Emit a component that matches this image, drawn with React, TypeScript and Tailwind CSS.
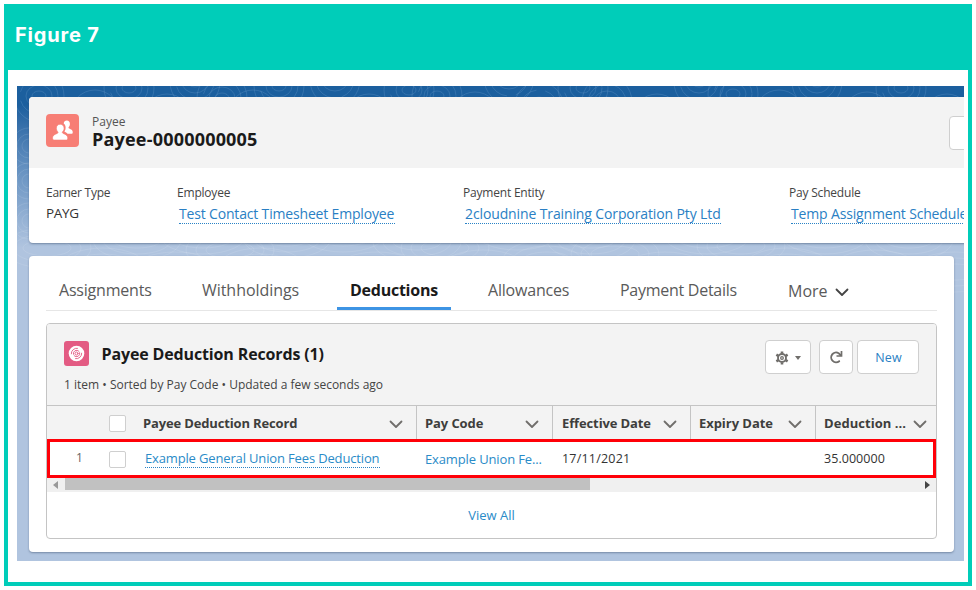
import React from "react";

const ripples = [
  [22, 10], [78, 30], [112, 2], [150, 34], [178, -4], [205, 12], [236, 30], [262, 0], [318, -6], [352, 34],
  [392, 4], [420, 10], [458, 32], [492, -8], [522, 22], [566, 2], [590, 16], [640, 34], [682, -4], [716, 8],
  [762, 30], [800, -4], [850, 32], [884, 2], [930, 34],
];

function Contours() {
  return (
    <svg className="absolute inset-0" width="947" height="475" fill="none">
      <g stroke="#8fb8e0" strokeOpacity="0.2" strokeWidth="1">
        {ripples.map(([x, y]) => (
          <g key={x}>
            <ellipse cx={x} cy={y} rx="7" ry="5" />
            <ellipse cx={x} cy={y} rx="13" ry="11" />
            <ellipse cx={x} cy={y} rx="19" ry="18" strokeDasharray="22 9" />
            <ellipse cx={x} cy={y} rx="25" ry="26" />
          </g>
        ))}
      </g>
      <g stroke="#ffffff" strokeOpacity="0.1">
        {ripples.map(([x, y]) => (
          <g key={x}>
            <ellipse cx={x + 8} cy={y + 152} rx="24" ry="8" />
            <ellipse cx={x + 8} cy={y + 152} rx="34" ry="14" />
            <ellipse cx={x + 8} cy={y + 152} rx="44" ry="20" />
          </g>
        ))}
        {[60, 95, 135].map((y) => (
          <g key={y}>
            <circle cx="12" cy={y} r="7" />
            <circle cx="12" cy={y} r="12" />
            <circle cx="12" cy={y} r="18" />
          </g>
        ))}
      </g>
    </svg>
  );
}

function Chevron({ className = "" }: { className?: string }) {
  return (
    <svg className={"shrink-0 " + className} width="14" height="9" viewBox="0 0 14 9" fill="none" stroke="currentColor" strokeWidth="1.8" strokeLinecap="round" strokeLinejoin="round">
      <path d="M1.5 1.5 7 7l5.5-5.5" />
    </svg>
  );
}

function PeopleIcon() {
  return (
    <svg className="block h-[33px] w-[33px]" viewBox="0 0 33 33">
      <g fill="#fff">
        <path d="M20.800 6.600c2 0 3.100 1.400 3.100 3.300 0 1.300-.5 2.300-1.200 3-.4.500-.2 1.100.5 1.500 1.900.9 3.500 1.600 3.500 3.300v1c0 .7-.5 1.100-1.200 1.100h-4c-.8-1.200-2-1.800-3.100-2.300.9-1.100 1.200-2.500 1.200-4 0-1.600-.6-3.100-1.900-4 .2-1.700 1.300-2.900 3.100-2.900z" />
        <path stroke="#f77e75" strokeWidth="0.700" d="M14.200 10.200c2.400 0 3.900 1.700 3.900 4 0 1.500-.6 2.700-1.500 3.500-.5.600-.3 1.300.5 1.700 2.500 1 4.600 2 4.600 4v1.200c0 .9-.6 1.500-1.500 1.500H8.200c-.9 0-1.600-.6-1.600-1.500v-1.200c0-2 2.100-3 4.600-4 .9-.4 1-1.100.5-1.700-.8-.8-1.400-2-1.400-3.500 0-2.300 1.500-4 3.900-4z" />
      </g>
    </svg>
  );
}

function DiscIcon() {
  return (
    <svg className="block" width="25" height="25" viewBox="0 0 25 25" fill="none">
      <circle cx="12.500" cy="12.500" r="7.800" fill="#fff" />
      <g stroke="#e35b83" strokeWidth="0.900" strokeLinecap="round">
        <circle cx="12.500" cy="12.500" r="1.500" />
        <path d="M9.400 13.300a3.300 3.300 0 0 1 5.500-3.100M15.700 11.700a3.300 3.300 0 0 1-5.500 3.100" />
        <path d="M7.300 12.800a5.200 5.200 0 0 1 6.200-5.500M17.700 12.200a5.200 5.200 0 0 1-6.200 5.500" />
      </g>
    </svg>
  );
}

function GearIcon() {
  return (
    <svg width="14" height="14" viewBox="0 0 14 14" fill="none" stroke="#706e6b">
      <circle cx="7" cy="7" r="4" strokeWidth="1.900" />
      <circle cx="7" cy="7" r="1.300" strokeWidth="1.300" />
      <path strokeWidth="2.600" d="M7 .4v2.200M7 11.400v2.200M1.360 3.740l1.900 1.100M10.740 9.160l1.900 1.100M12.640 3.740l-1.900 1.100M3.260 9.160l-1.900 1.100" />
    </svg>
  );
}

function RefreshIcon() {
  return (
    <svg width="14" height="14" viewBox="0 0 14 14" fill="none">
      <path d="M10.200 11.200A4.900 4.900 0 1 1 9.600 3.200L11.400 5" stroke="#706e6b" strokeWidth="1.900" strokeLinecap="round" />
      <path d="M12.500 1v5H7.500" stroke="#706e6b" strokeWidth="1.700" />
    </svg>
  );
}

function Detail({ label, width, tracking, children }: { label: string; width: string; tracking: string; children: React.ReactNode }) {
  return (
    <div className={"shrink-0 " + width}>
      <div className={"h-[14px] text-[12px] leading-[16px] text-[#444] " + tracking}>{label}</div>
      {children}
    </div>
  );
}

function DetailLink({ text, width, tracking }: { text: string; width: string; tracking: string }) {
  return (
    <div className={"mt-[6px] ml-[2px] h-[19px] border-b border-dotted border-[#2a83c6] text-[14px] leading-[18px] text-[#2a7fc4] " + width + " " + tracking}>
      {text}
    </div>
  );
}

function HeadCell({ text, width, tracking }: { text: string; width: string; tracking: string }) {
  return (
    <div className={"flex shrink-0 items-center justify-between border-r border-[#c4c4c4] pt-[2px] text-[13px] font-bold text-[#3e3e3c] " + width}>
      <span className={tracking}>{text}</span>
      <Chevron className="mr-[13px] mt-px text-[#706e6b]" />
    </div>
  );
}

function Box() {
  return <span className="block h-[17px] w-[17px] shrink-0 rounded-[2px] border border-[#cfcfcf] bg-white" />;
}

export default function App() {
  return (
    <div className="h-[590px] w-[976px] bg-white p-1 whitespace-nowrap font-['Open_Sans','Noto_Sans',sans-serif]">
      <div className="h-[582px] w-[968px] border-4 border-[#00cdb9] bg-white">
        <header className="h-[62px] bg-[#00cdb9] pl-[7px] pt-[15px] font-['Inter',sans-serif] text-[20px] leading-6 font-bold tracking-[0.800px] text-white">
          Figure 7
        </header>

        <div className="relative mt-4 ml-[9px] h-[475px] w-[947px] overflow-hidden bg-linear-to-b from-[#1b5f9e] from-[4%] via-[#6390c0] via-[17%] to-[#b0c4df] to-[34%]">
          <Contours />
          <div className="relative pl-3 pt-[11px]">
            <section className="h-[146px] w-[960px] overflow-hidden rounded-[4px] bg-white shadow-[0_1px_2px_rgba(60,80,110,0.5)]">
              <div className="flex h-[71px] items-start bg-[#f3f3f3] pl-[17px]">
                <div className="mt-[17px] h-[33px] w-[33px] rounded-[4px] bg-[#f77e75]"><PeopleIcon /></div>
                <div className="ml-[13px] mt-[18px] w-[857px]">
                  <div className="h-[14px] text-[12px] leading-[14px] text-[#555]">Payee</div>
                  <h1 className="h-5 text-[18px] leading-5 font-bold tracking-[0.200px] text-[#1a1a1a]">Payee-0000000005</h1>
                </div>
                <div className="mt-[19px] h-[34px] w-10 shrink-0 rounded-[4px] border border-[#cfcfcf] bg-white" />
              </div>
              <div className="flex pl-[17px] pt-[17px]">
                <Detail label="Earner Type" width="w-[131px]" tracking="tracking-[-0.250px]">
                  <div className="mt-[5px] text-[13.500px] leading-[18px] tracking-[-0.350px] text-[#333]">PAYG</div>
                </Detail>
                <Detail label="Employee" width="w-[286px]" tracking="tracking-[-0.200px]">
                  <DetailLink text="Test Contact Timesheet Employee" width="w-[216px]" tracking="tracking-[-0.170px]" />
                </Detail>
                <Detail label="Payment Entity" width="w-[326px]" tracking="tracking-[-0.200px]">
                  <DetailLink text="2cloudnine Training Corporation Pty Ltd" width="w-[256px]" tracking="tracking-[-0.120px]" />
                </Detail>
                <Detail label="Pay Schedule" width="w-[180px]" tracking="tracking-[-0.200px]">
                  <DetailLink text="Temp Assignment Schedule" width="w-[178px]" tracking="tracking-[-0.160px]" />
                </Detail>
              </div>
            </section>

            <section className="mt-[13px] h-[296px] w-[925px] rounded-[4px] bg-white px-[17px] shadow-[0_1px_2px_rgba(60,80,110,0.5)]">
              <nav className="flex h-[55px] border-b border-[#e6e6e6] pl-[13px] text-[16px] text-[#5a5a5a]">
                <span className="w-[143px] pt-6 leading-5 tracking-[-0.200px]">Assignments</span>
                <span className="w-[135px] pt-6 leading-5 tracking-[-0.050px]">Withholdings</span>
                <span className="-mb-px h-[54px] w-[114px] border-b-[3px] border-[#3d94e4] pl-[13px] pt-6 leading-5 font-bold tracking-[-0.250px] text-[#1a1a1a]">Deductions</span>
                <span className="ml-[37px] w-[132px] pt-6 leading-5 tracking-[-0.200px]">Allowances</span>
                <span className="w-[168px] pt-6 leading-5 tracking-[-0.270px]">Payment Details</span>
                <span className="flex w-[61px] justify-between pt-[25px] leading-5">
                  More <Chevron className="mt-[7px] text-[#444]" />
                </span>
              </nav>

              <div className="mt-3 h-[216px] overflow-hidden rounded-[4px] border border-[#c4c4c4]">
                <div className="flex h-[82px] justify-between border-b border-[#c4c4c4] bg-[#f3f3f3] pl-[17px] pr-[17px] pt-[17px]">
                  <div>
                    <div className="flex h-[25px] items-center">
                      <div className="h-[25px] w-[25px] rounded-[3px] bg-[#e35b83]"><DiscIcon /></div>
                      <h2 className="ml-[12.500px] text-[16px] leading-5 font-bold tracking-[-0.140px] text-[#1a1a1a]">Payee Deduction Records (1)</h2>
                    </div>
                    <div className="mt-[12px] text-[12px] leading-[14px] text-[#444]">1 item • Sorted by Pay Code • Updated a few seconds ago</div>
                  </div>
                  <div className="flex -mt-px h-[34px]">
                    <button className="flex w-[46px] items-center justify-center gap-[6px] rounded-[4px] border border-[#cfcfcf] bg-white pr-px pt-px">
                      <GearIcon />
                      <svg width="6" height="4"><path d="M0 0h6L3 4z" fill="#706e6b" /></svg>
                    </button>
                    <button className="ml-2 flex w-[34px] items-center justify-center rounded-[4px] border border-[#cfcfcf] bg-white pb-px"><RefreshIcon /></button>
                    <button className="ml-1 w-[62px] rounded-[4px] border border-[#cfcfcf] bg-white pt-[2px] pl-px text-[12.500px] tracking-[0.200px] text-[#2a7fc4]">New</button>
                  </div>
                </div>

                <div className="flex h-[33px] bg-[#f3f3f3]">
                  <div className="flex w-[87px] shrink-0 items-center pl-[62px] pt-[2px]"><Box /></div>
                  <HeadCell text="Payee Deduction Record" width="w-[283px] pl-[9px]" tracking="tracking-[-0.150px]" />
                  <HeadCell text="Pay Code" width="w-[136px] pl-[8px]" tracking="tracking-[-0.100px]" />
                  <HeadCell text="Effective Date" width="w-[138px] pl-[9px]" tracking="tracking-[-0.120px]" />
                  <HeadCell text="Expiry Date" width="w-[125px] pl-[8px]" tracking="tracking-[-0.050px]" />
                  <div className="flex flex-1 items-center justify-between pl-[8px] pt-[2px] text-[13px] font-bold text-[#3e3e3c]">
                    <span className="tracking-[0.050px]">Deduction ...</span>
                    <Chevron className="mr-[9px] mt-px text-[#706e6b]" />
                  </div>
                </div>

                <div className="flex h-[39px] border-[3px] border-[#ff0008] bg-white text-[12.500px] leading-4 text-[#333]">
                  <span className="w-[59px] pl-[26px] pt-[8px] text-[12px] text-[#666]">1</span>
                  <span className="w-[36px] pt-[9px]"><Box /></span>
                  <span className="mt-[8px] h-[18px] w-[235px] border-b border-dotted border-[#2a83c6] text-[13px] tracking-[-0.150px] text-[#2a8bc8]">Example General Union Fees Deduction</span>
                  <span className="ml-[45px] w-[137px] pt-[9px] text-[13px] tracking-[-0.130px] text-[#2a8bc8]">Example Union Fe...</span>
                  <span className="w-[262px] pt-[9px] tracking-[0.200px]">17/11/2021</span>
                  <span className="pt-[9px] tracking-[0.050px]">35.000000</span>
                </div>

                <div className="flex h-[14px] items-center bg-[#f0f0f0]">
                  <svg className="ml-[6px]" width="5" height="8"><path d="M5 0v8L0 4z" fill="#999" /></svg>
                  <div className="ml-[7px] h-3 w-[525px] self-start bg-[#c1c1c1]" />
                  <svg className="ml-auto mr-[6px]" width="5" height="8"><path d="M0 0v8l5-4z" fill="#444" /></svg>
                </div>

                <div className="pt-[15px] text-center text-[13px] leading-4 text-[#2a8bc8]">View All</div>
              </div>
            </section>
          </div>
        </div>
      </div>
    </div>
  );
}
